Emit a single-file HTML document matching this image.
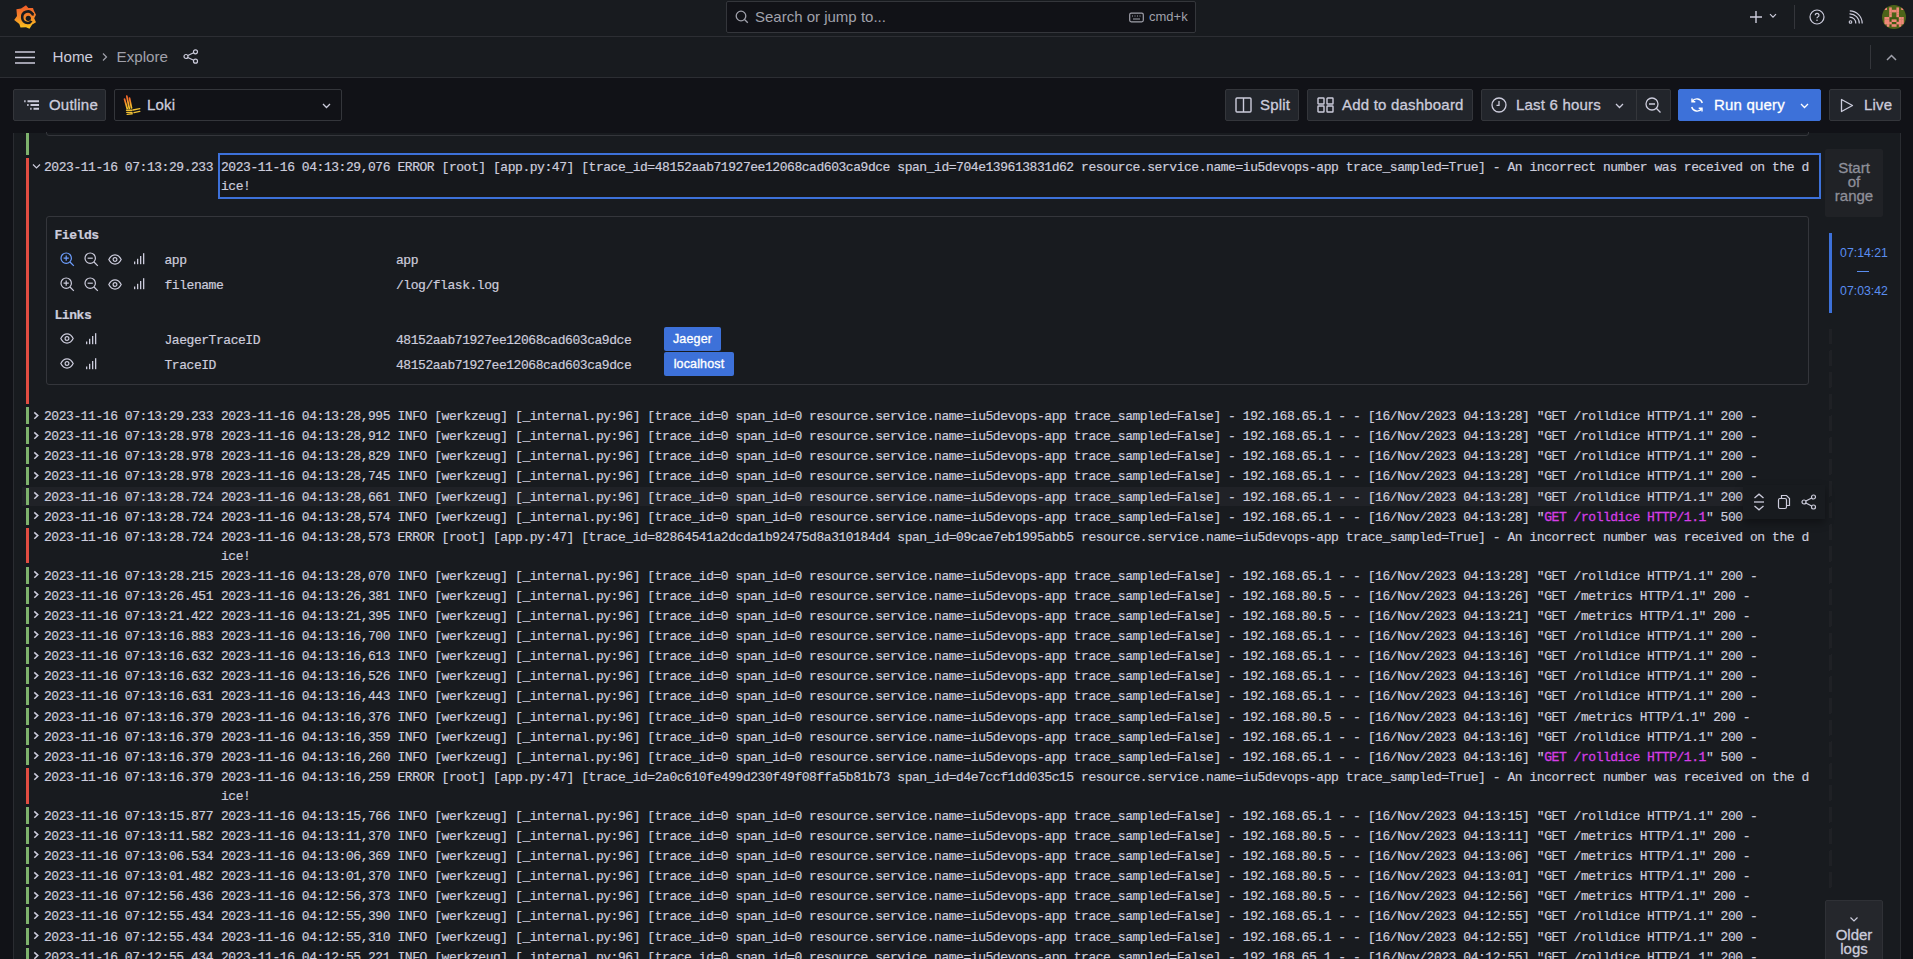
<!DOCTYPE html>
<html><head><meta charset="utf-8">
<style>
*{box-sizing:border-box;margin:0;padding:0}
html,body{-webkit-font-smoothing:antialiased;width:1913px;height:959px;overflow:hidden;background:#111217;font-family:"Liberation Sans",sans-serif;color:#ccccdc}
.abs{position:absolute}
svg{display:block}
#topbar{position:absolute;left:0;top:0;width:1913px;height:37px;background:#181b1f;border-bottom:1px solid #2c2e33}
#crumbs{position:absolute;left:0;top:37px;width:1913px;height:41px;background:#181b1f;border-bottom:1px solid #2c2e33}
#search{position:absolute;left:726px;top:1px;width:470px;height:32px;background:#111217;border:1px solid #34363b;border-radius:2px}
#search .ph{position:absolute;left:28px;top:7px;font-size:15px;color:#a0a1ab;line-height:16px}
#search .kbd{position:absolute;left:422px;top:7px;font-size:13px;color:#a0a1ab;line-height:16px}
.crumb{position:absolute;top:48px;font-size:15.2px;line-height:18px}
.btn{position:absolute;top:89px;height:32px;background:#22252b;border:1px solid #34363b;border-radius:2px;font-size:15px;color:#ccccdc;line-height:30px;white-space:nowrap}
.btn span{position:absolute;top:0;letter-spacing:0.2px;-webkit-text-stroke:0.3px currentColor}
#panel{position:absolute;left:13px;top:133px;width:1888px;height:900px;background:#181b1f;border:1px solid #2a2c31;border-top:none;border-radius:0 0 2px 2px;overflow:hidden}
.row{position:absolute;left:0;width:1813px;font-family:"Liberation Mono",monospace;font-size:13px;letter-spacing:-0.4503px;line-height:19.2px;color:#ccccdc;white-space:pre;-webkit-text-stroke:0.2px #ccccdc}
.row .lv{position:absolute;left:13px;top:1.5px;bottom:1.5px;width:3px}
.lv.info{background:#7eb26d}
.lv.err{background:#e24d42}
.row .chev{position:absolute;left:20px;top:5px}
.row .ts{position:absolute;left:31px;top:1px}
.row .msg{position:absolute;left:208px;top:1px;width:1590px;white-space:pre-wrap;word-break:break-all}
.row.hov{background:transparent}
.hovbg{position:absolute;background:#202227}
.dt{position:absolute;font-family:"Liberation Mono",monospace;font-size:13px;letter-spacing:-0.4503px;line-height:19.2px;color:#ccccdc;white-space:pre;-webkit-text-stroke:0.2px #ccccdc}
.lbtn{position:absolute;height:24px;background:#3d71d9;border-radius:2px;color:#fff;font-size:12.5px;letter-spacing:0.15px;-webkit-text-stroke:0.35px #fff;line-height:24px;text-align:center}
.hl{color:#d63ee6;-webkit-text-stroke:0.3px #d63ee6}

</style></head>
<body>
<!-- top bar -->
<div id="topbar">
  <svg class="abs" style="left:8px;top:2px" width="34" height="32" viewBox="0 0 34 32">
    <defs><linearGradient id="lg" x1="0" y1="0" x2="0" y2="1"><stop offset="0" stop-color="#f05a28"/><stop offset="0.5" stop-color="#f4862a"/><stop offset="1" stop-color="#fbc81c"/></linearGradient></defs>
    <path fill="url(#lg)" d="M18 3.2 L20.4 6 L25 6.1 L25.8 8.6 L28 12.7 L26.2 16.2 L28 20.3 L24.2 22.6 L21.5 26.7 L18 25.2 L12.5 25.5 L11.3 22 L6.2 17.9 L9 13.9 L8.4 7.3 L13.1 6.6 Z"/>
    <path d="M25.8 12.4 L24.6 12.2 A5.6 5.6 0 0 0 14.2 15.6 A5.4 5.4 0 0 0 19.6 21 A4.5 4.5 0 0 0 23.4 18.8" fill="none" stroke="#181b1f" stroke-width="2.6"/>
    <circle cx="20.3" cy="16.3" r="2.6" fill="#181b1f"/>
  </svg>
  <div id="search">
    <svg class="abs" style="left:8px;top:8px" width="14" height="14" viewBox="0 0 14 14"><circle cx="6" cy="6" r="4.8" fill="none" stroke="#a0a1ab" stroke-width="1.3"/><path d="M9.5 9.5 L12.8 12.8" stroke="#a0a1ab" stroke-width="1.3"/></svg>
    <div class="ph">Search or jump to...</div>
    <svg class="abs" style="left:402px;top:10px" width="15" height="11" viewBox="0 0 15 11"><rect x="0.7" y="1.2" width="13.6" height="8.6" rx="1.5" fill="none" stroke="#a0a1ab" stroke-width="1.2"/><path d="M3 4h1M5.5 4h1M8 4h1M10.5 4h1M4 7h7" stroke="#a0a1ab" stroke-width="1.1"/></svg>
    <div class="kbd">cmd+k</div>
  </div>
  <!-- plus -->
  <svg class="abs" style="left:1749px;top:10px" width="14" height="14" viewBox="0 0 14 14"><path d="M7 1V13M1 7H13" stroke="#ccccdc" stroke-width="1.4"/></svg>
  <svg class="abs" style="left:1769px;top:13px" width="8" height="6" viewBox="0 0 8 6"><path d="M1 1.2L4 4.2L7 1.2" fill="none" stroke="#ccccdc" stroke-width="1.2"/></svg>
  <div class="abs" style="left:1794px;top:5px;width:1px;height:24px;background:#34363b"></div>
  <!-- help -->
  <svg class="abs" style="left:1809px;top:9px" width="16" height="16" viewBox="0 0 16 16"><circle cx="8" cy="8" r="7" fill="none" stroke="#ccccdc" stroke-width="1.2"/><path d="M6.2 6.3a1.9 1.9 0 1 1 2.6 1.7c-.6.3-.8.6-.8 1.3" fill="none" stroke="#ccccdc" stroke-width="1.2"/><circle cx="8" cy="11.3" r=".8" fill="#ccccdc"/></svg>
  <!-- rss -->
  <svg class="abs" style="left:1848px;top:10px" width="15" height="15" viewBox="0 0 15 15"><circle cx="2.5" cy="12" r="1.3" fill="none" stroke="#ccccdc" stroke-width="1.1"/><path d="M1.5 7.2a6 6 0 0 1 6.3 6.3M1.5 3.8a9.5 9.5 0 0 1 9.8 9.8M1.8 0.8a12.6 12.6 0 0 1 12.4 12.6" fill="none" stroke="#ccccdc" stroke-width="1.2"/></svg>
  <!-- avatar -->
  <svg class="abs" style="left:1882px;top:5px" width="24" height="24" viewBox="0 0 10 10">
    <defs><clipPath id="cav"><circle cx="5" cy="5" r="5"/></clipPath></defs>
    <g clip-path="url(#cav)"><rect width="10" height="10" fill="#4d6419"/><rect x="3" y="5" width="4" height="4" fill="#3f5a12"/>
    <g fill="#f08878"><rect x="1" y="1" width="1.08" height="1.08"/><rect x="8" y="1" width="1.08" height="1.08"/><rect x="3" y="1" width="1.08" height="1.08"/><rect x="3" y="2" width="1.08" height="1.08"/><rect x="3" y="3" width="1.08" height="1.08"/><rect x="3" y="4" width="1.08" height="1.08"/><rect x="6" y="1" width="1.08" height="1.08"/><rect x="6" y="2" width="1.08" height="1.08"/><rect x="6" y="3" width="1.08" height="1.08"/><rect x="6" y="4" width="1.08" height="1.08"/><rect x="4" y="2" width="1.08" height="1.08"/><rect x="5" y="2" width="1.08" height="1.08"/><rect x="1" y="5" width="1.08" height="1.08"/><rect x="2" y="5" width="1.08" height="1.08"/><rect x="1" y="6" width="1.08" height="1.08"/><rect x="2" y="6" width="1.08" height="1.08"/><rect x="1" y="7" width="1.08" height="1.08"/><rect x="2" y="7" width="1.08" height="1.08"/><rect x="3" y="7" width="1.08" height="1.08"/><rect x="2" y="8" width="1.08" height="1.08"/><rect x="7" y="5" width="1.08" height="1.08"/><rect x="8" y="5" width="1.08" height="1.08"/><rect x="7" y="6" width="1.08" height="1.08"/><rect x="8" y="6" width="1.08" height="1.08"/><rect x="6" y="7" width="1.08" height="1.08"/><rect x="7" y="7" width="1.08" height="1.08"/><rect x="8" y="7" width="1.08" height="1.08"/><rect x="7" y="8" width="1.08" height="1.08"/><rect x="4" y="6" width="1.08" height="1.08"/><rect x="5" y="6" width="1.08" height="1.08"/><rect x="4" y="8" width="1.08" height="1.08"/><rect x="5" y="8" width="1.08" height="1.08"/></g></g>
  </svg>
</div>

<!-- breadcrumbs bar -->
<div id="crumbs">
  <svg class="abs" style="left:15px;top:14px" width="20" height="13" viewBox="0 0 20 13"><path d="M0 1H20M0 6.5H20M0 12H20" stroke="#ccccdc" stroke-width="1.5"/></svg>
</div>
<div class="crumb" style="left:52.5px;color:#ccccdc">Home</div>
<svg class="abs" style="left:101px;top:52px" width="8" height="10" viewBox="0 0 8 10"><path d="M2 1.5L5.5 5L2 8.5" fill="none" stroke="#a0a1ab" stroke-width="1.2"/></svg>
<div class="crumb" style="left:116.5px;color:#a0a1ab">Explore</div>
<svg class="abs" style="left:183px;top:49px" width="16" height="15" viewBox="0 0 16 15"><circle cx="12.5" cy="2.8" r="2" fill="none" stroke="#ccccdc" stroke-width="1.2"/><circle cx="3" cy="7.5" r="2" fill="none" stroke="#ccccdc" stroke-width="1.2"/><circle cx="12.5" cy="12.2" r="2" fill="none" stroke="#ccccdc" stroke-width="1.2"/><path d="M4.8 6.5L10.7 3.8M4.8 8.5L10.7 11.2" stroke="#ccccdc" stroke-width="1.2"/></svg>
<div class="abs" style="left:1870px;top:45px;width:1px;height:24px;background:#34363b"></div>
<svg class="abs" style="left:1886px;top:54px" width="11" height="7" viewBox="0 0 11 7"><path d="M1 6L5.5 1.5L10 6" fill="none" stroke="#a0a1ab" stroke-width="1.5"/></svg>

<!-- toolbar -->
<div class="btn" style="left:13px;width:93px">
  <svg class="abs" style="left:9px;top:8px" width="18" height="14" viewBox="0 0 18 14"><path d="M4.5 3.2H16M7.5 7H16M10.5 10.8H16" stroke="#ccccdc" stroke-width="1.9"/><path d="M1.2 3.2H2.6M4.2 7H5.6M7.2 10.8H8.6" stroke="#ccccdc" stroke-width="1.9"/></svg>
  <span style="left:35px">Outline</span>
</div>
<div class="btn" style="left:114px;width:228px;background:#111217">
  <svg class="abs" style="left:3px;top:2px" width="30" height="26" viewBox="0 0 30 26">
    <defs><linearGradient id="lk" x1="0" y1="0" x2="0" y2="1"><stop offset="0" stop-color="#f4642a"/><stop offset="0.6" stop-color="#f5a62a"/><stop offset="1" stop-color="#f2c62e"/></linearGradient></defs>
    <g fill="none" stroke="url(#lk)" stroke-width="1.7" stroke-linecap="round"><path d="M6.5 7L9.2 16.5"/><path d="M8.8 4.2L11.3 16.5"/><path d="M11.5 6L13.5 16"/></g>
    <g fill="none" stroke="#efc034" stroke-width="1.4" stroke-linecap="round"><path d="M8.5 18.2H13.8"/><path d="M8.8 20.4H14"/><path d="M9.2 22.4L14.2 21.8"/><path d="M15 18L21.8 16.6"/><path d="M16 20.6L21.8 19.4"/></g>
  </svg>
  <span style="left:32px">Loki</span>
  <svg class="abs" style="left:207px;top:13px" width="9" height="6" viewBox="0 0 9 6"><path d="M1 1L4.5 4.5L8 1" fill="none" stroke="#ccccdc" stroke-width="1.3"/></svg>
</div>

<div class="btn" style="left:1225px;width:74px">
  <svg class="abs" style="left:9px;top:7px" width="17" height="16" viewBox="0 0 17 16"><rect x="1" y="1" width="15" height="14" rx="1" fill="none" stroke="#ccccdc" stroke-width="1.4"/><path d="M8.5 1V15" stroke="#ccccdc" stroke-width="1.4"/></svg>
  <span style="left:34px">Split</span>
</div>
<div class="btn" style="left:1307px;width:166px">
  <svg class="abs" style="left:9px;top:7px" width="17" height="16" viewBox="0 0 17 16"><g fill="none" stroke="#ccccdc" stroke-width="1.4"><rect x="1" y="1" width="6" height="6" rx=".6"/><rect x="10" y="1" width="6" height="6" rx=".6"/><rect x="1" y="9" width="6" height="6" rx=".6"/><rect x="10" y="9" width="6" height="6" rx=".6"/></g></svg>
  <span style="left:34px">Add to dashboard</span>
</div>
<div class="btn" style="left:1481px;width:190px">
  <svg class="abs" style="left:9px;top:7px" width="16" height="16" viewBox="0 0 16 16"><circle cx="8" cy="8" r="7" fill="none" stroke="#ccccdc" stroke-width="1.3"/><path d="M8 4V8.3H5.5" fill="none" stroke="#ccccdc" stroke-width="1.3"/></svg>
  <span style="left:34px">Last 6 hours</span>
  <svg class="abs" style="left:133px;top:13px" width="9" height="6" viewBox="0 0 9 6"><path d="M1 1L4.5 4.5L8 1" fill="none" stroke="#ccccdc" stroke-width="1.3"/></svg>
  <div class="abs" style="left:154px;top:0;width:1px;height:30px;background:#34363b"></div>
  <svg class="abs" style="left:163px;top:7px" width="17" height="17" viewBox="0 0 17 17"><circle cx="7" cy="7" r="6" fill="none" stroke="#ccccdc" stroke-width="1.3"/><path d="M4 7H10M11.3 11.3L15.5 15.5" stroke="#ccccdc" stroke-width="1.3"/></svg>
</div>
<div class="btn" style="left:1678px;width:143px;background:#3d71d9;border-color:#3d71d9;color:#fff">
  <svg class="abs" style="left:10px;top:7px" width="16" height="16" viewBox="0 0 16 16"><g fill="none" stroke="#fff" stroke-width="1.4"><path d="M13.3 6A5.6 5.6 0 0 0 3.2 4.5"/><path d="M2.7 10A5.6 5.6 0 0 0 12.8 11.5"/><path d="M3 1.5V4.8H6.3M13 14.5V11.2H9.7"/></g></svg>
  <span style="left:35px">Run query</span>
  <svg class="abs" style="left:121px;top:13px" width="9" height="6" viewBox="0 0 9 6"><path d="M1 1L4.5 4.5L8 1" fill="none" stroke="#fff" stroke-width="1.3"/></svg>
</div>
<div class="btn" style="left:1829px;width:72px">
  <svg class="abs" style="left:10px;top:8px" width="14" height="15" viewBox="0 0 14 15"><path d="M1.5 1.5V13.5L12.5 7.5Z" fill="none" stroke="#ccccdc" stroke-width="1.3" stroke-linejoin="round"/></svg>
  <span style="left:34px">Live</span>
</div>

<!-- logs panel -->
<div id="panel">
</div>
<div id="logs" class="abs" style="left:13px;top:132px;width:1820px;height:827px;overflow:hidden">
  <!-- previous expanded tail -->
  <i class="abs" style="left:13px;top:1px;width:3px;height:22px;background:#7eb26d"></i>
  <div class="abs" style="left:33px;top:-20px;width:1763px;height:24px;border:1px solid #34363b;border-radius:3px"></div>
  <!-- expanded row -->
  <svg class="abs" style="left:19px;top:31px" width="9" height="7" viewBox="0 0 9 7"><path d="M1 1.5L4.5 5L8 1.5" fill="none" stroke="#ccccdc" stroke-width="1.2"/></svg>
  <i class="abs" style="left:13px;top:26px;width:3px;height:246px;background:#e24d42"></i>
  <div class="row" style="top:24.5px;height:40px"><span class="ts">2023-11-16 07:13:29.233</span></div>
  <div class="abs" style="left:205px;top:21px;width:1603px;height:46px;border:2px solid #3d71d9;background:#16181c"></div>
  <div class="row" style="top:24.5px;height:40px"><span class="msg" style="left:208px">2023-11-16 04:13:29,076 ERROR [root] [app.py:47] [trace_id=48152aab71927ee12068cad603ca9dce span_id=704e139613831d62 resource.service.name=iu5devops-app trace_sampled=True] - An incorrect number was received on the dice!</span></div>
  <div id="details" class="abs" style="left:33px;top:84px;width:1763px;height:169px;border:1px solid #34363b;border-radius:3px"></div>
  <div class="dt" style="left:41.5px;top:94px;font-weight:bold">Fields</div>
  <svg class="abs" style="left:46.5px;top:120px" width="15" height="15" viewBox="0 0 15 15"><g fill="none" stroke="#6e9fff" stroke-width="1.2"><circle cx="6.2" cy="6.2" r="5.2"/><path d="M10 10L13.8 13.8"/><path d="M3.6 6.2H8.8M6.2 3.6V8.8"/></g></svg>
<svg class="abs" style="left:70.5px;top:120px" width="15" height="15" viewBox="0 0 15 15"><g fill="none" stroke="#ccccdc" stroke-width="1.2"><circle cx="6.2" cy="6.2" r="5.2"/><path d="M10 10L13.8 13.8"/><path d="M3.6 6.2H8.8"/></g></svg>
<svg class="abs" style="left:95px;top:121.8px" width="14" height="11" viewBox="0 0 14 11"><g fill="none" stroke="#ccccdc" stroke-width="1.2"><path d="M0.8 5.5C2.5 2.2 4.8 0.9 7 0.9S11.5 2.2 13.2 5.5C11.5 8.8 9.2 10.1 7 10.1S2.5 8.8 0.8 5.5Z"/><circle cx="7" cy="5.5" r="1.9"/></g></svg>
<svg class="abs" style="left:120.5px;top:121px" width="11" height="12" viewBox="0 0 11 12"><g fill="#ccccdc"><rect x="0" y="8.5" width="1.3" height="2.7"/><rect x="3" y="5.8" width="1.3" height="5.4"/><rect x="6" y="3" width="1.3" height="8.2"/><rect x="9" y="0.2" width="1.3" height="11"/></g></svg>
<svg class="abs" style="left:46.5px;top:145px" width="15" height="15" viewBox="0 0 15 15"><g fill="none" stroke="#ccccdc" stroke-width="1.2"><circle cx="6.2" cy="6.2" r="5.2"/><path d="M10 10L13.8 13.8"/><path d="M3.6 6.2H8.8M6.2 3.6V8.8"/></g></svg>
<svg class="abs" style="left:70.5px;top:145px" width="15" height="15" viewBox="0 0 15 15"><g fill="none" stroke="#ccccdc" stroke-width="1.2"><circle cx="6.2" cy="6.2" r="5.2"/><path d="M10 10L13.8 13.8"/><path d="M3.6 6.2H8.8"/></g></svg>
<svg class="abs" style="left:95px;top:146.8px" width="14" height="11" viewBox="0 0 14 11"><g fill="none" stroke="#ccccdc" stroke-width="1.2"><path d="M0.8 5.5C2.5 2.2 4.8 0.9 7 0.9S11.5 2.2 13.2 5.5C11.5 8.8 9.2 10.1 7 10.1S2.5 8.8 0.8 5.5Z"/><circle cx="7" cy="5.5" r="1.9"/></g></svg>
<svg class="abs" style="left:120.5px;top:146px" width="11" height="12" viewBox="0 0 11 12"><g fill="#ccccdc"><rect x="0" y="8.5" width="1.3" height="2.7"/><rect x="3" y="5.8" width="1.3" height="5.4"/><rect x="6" y="3" width="1.3" height="8.2"/><rect x="9" y="0.2" width="1.3" height="11"/></g></svg>
<svg class="abs" style="left:47px;top:201.0px" width="14" height="11" viewBox="0 0 14 11"><g fill="none" stroke="#ccccdc" stroke-width="1.2"><path d="M0.8 5.5C2.5 2.2 4.8 0.9 7 0.9S11.5 2.2 13.2 5.5C11.5 8.8 9.2 10.1 7 10.1S2.5 8.8 0.8 5.5Z"/><circle cx="7" cy="5.5" r="1.9"/></g></svg>
<svg class="abs" style="left:73px;top:201.0px" width="11" height="12" viewBox="0 0 11 12"><g fill="#ccccdc"><rect x="0" y="8.5" width="1.3" height="2.7"/><rect x="3" y="5.8" width="1.3" height="5.4"/><rect x="6" y="3" width="1.3" height="8.2"/><rect x="9" y="0.2" width="1.3" height="11"/></g></svg>
<svg class="abs" style="left:47px;top:226.0px" width="14" height="11" viewBox="0 0 14 11"><g fill="none" stroke="#ccccdc" stroke-width="1.2"><path d="M0.8 5.5C2.5 2.2 4.8 0.9 7 0.9S11.5 2.2 13.2 5.5C11.5 8.8 9.2 10.1 7 10.1S2.5 8.8 0.8 5.5Z"/><circle cx="7" cy="5.5" r="1.9"/></g></svg>
<svg class="abs" style="left:73px;top:226.0px" width="11" height="12" viewBox="0 0 11 12"><g fill="#ccccdc"><rect x="0" y="8.5" width="1.3" height="2.7"/><rect x="3" y="5.8" width="1.3" height="5.4"/><rect x="6" y="3" width="1.3" height="8.2"/><rect x="9" y="0.2" width="1.3" height="11"/></g></svg>
  <div class="dt" style="left:151.5px;top:119px">app</div><div class="dt" style="left:383px;top:119px">app</div>
  <div class="dt" style="left:151.5px;top:143.8px">filename</div><div class="dt" style="left:383px;top:143.8px">/log/flask.log</div>
  <div class="dt" style="left:41.5px;top:174.3px;font-weight:bold">Links</div>
  <div class="dt" style="left:151.5px;top:199.1px">JaegerTraceID</div><div class="dt" style="left:383px;top:199.1px">48152aab71927ee12068cad603ca9dce</div>
  <div class="dt" style="left:151.5px;top:224.2px">TraceID</div><div class="dt" style="left:383px;top:224.2px">48152aab71927ee12068cad603ca9dce</div>
  <div class="lbtn" style="left:651px;top:195px;width:57px">Jaeger</div>
  <div class="lbtn" style="left:651px;top:220px;width:70px">localhost</div>
  <!-- hover -->
  <div class="hovbg" style="left:9px;top:355px;width:1721px;height:19px"></div>
  <div class="row" style="top:273.50px;height:20.15px"><i class="lv info"></i><svg class="chev" width="7" height="10" viewBox="0 0 7 10"><path d="M1.3 1.4L4.8 4.6L1.3 7.8" fill="none" stroke="#ccccdc" stroke-width="1.5"/></svg><span class="ts" style="top:1.52px">2023-11-16 07:13:29.233</span><span class="msg" style="top:1.52px">2023-11-16 04:13:28,995 INFO [werkzeug] [_internal.py:96] [trace_id=0 span_id=0 resource.service.name=iu5devops-app trace_sampled=False] - 192.168.65.1 - - [16/Nov/2023 04:13:28] "GET /rolldice HTTP/1.1" 200 -</span></div>
<div class="row" style="top:293.65px;height:20.15px"><i class="lv info"></i><svg class="chev" width="7" height="10" viewBox="0 0 7 10"><path d="M1.3 1.4L4.8 4.6L1.3 7.8" fill="none" stroke="#ccccdc" stroke-width="1.5"/></svg><span class="ts" style="top:1.37px">2023-11-16 07:13:28.978</span><span class="msg" style="top:1.37px">2023-11-16 04:13:28,912 INFO [werkzeug] [_internal.py:96] [trace_id=0 span_id=0 resource.service.name=iu5devops-app trace_sampled=False] - 192.168.65.1 - - [16/Nov/2023 04:13:28] "GET /rolldice HTTP/1.1" 200 -</span></div>
<div class="row" style="top:313.80px;height:20.15px"><i class="lv info"></i><svg class="chev" width="7" height="10" viewBox="0 0 7 10"><path d="M1.3 1.4L4.8 4.6L1.3 7.8" fill="none" stroke="#ccccdc" stroke-width="1.5"/></svg><span class="ts" style="top:1.22px">2023-11-16 07:13:28.978</span><span class="msg" style="top:1.22px">2023-11-16 04:13:28,829 INFO [werkzeug] [_internal.py:96] [trace_id=0 span_id=0 resource.service.name=iu5devops-app trace_sampled=False] - 192.168.65.1 - - [16/Nov/2023 04:13:28] "GET /rolldice HTTP/1.1" 200 -</span></div>
<div class="row" style="top:333.95px;height:20.15px"><i class="lv info"></i><svg class="chev" width="7" height="10" viewBox="0 0 7 10"><path d="M1.3 1.4L4.8 4.6L1.3 7.8" fill="none" stroke="#ccccdc" stroke-width="1.5"/></svg><span class="ts" style="top:1.07px">2023-11-16 07:13:28.978</span><span class="msg" style="top:1.07px">2023-11-16 04:13:28,745 INFO [werkzeug] [_internal.py:96] [trace_id=0 span_id=0 resource.service.name=iu5devops-app trace_sampled=False] - 192.168.65.1 - - [16/Nov/2023 04:13:28] "GET /rolldice HTTP/1.1" 200 -</span></div>
<div class="row hov" style="top:354.10px;height:20.15px"><i class="lv info"></i><svg class="chev" width="7" height="10" viewBox="0 0 7 10"><path d="M1.3 1.4L4.8 4.6L1.3 7.8" fill="none" stroke="#ccccdc" stroke-width="1.5"/></svg><span class="ts" style="top:1.92px">2023-11-16 07:13:28.724</span><span class="msg" style="top:1.92px">2023-11-16 04:13:28,661 INFO [werkzeug] [_internal.py:96] [trace_id=0 span_id=0 resource.service.name=iu5devops-app trace_sampled=False] - 192.168.65.1 - - [16/Nov/2023 04:13:28] "GET /rolldice HTTP/1.1" 200 -</span></div>
<div class="row" style="top:374.25px;height:20.15px"><i class="lv info"></i><svg class="chev" width="7" height="10" viewBox="0 0 7 10"><path d="M1.3 1.4L4.8 4.6L1.3 7.8" fill="none" stroke="#ccccdc" stroke-width="1.5"/></svg><span class="ts" style="top:1.77px">2023-11-16 07:13:28.724</span><span class="msg" style="top:1.77px">2023-11-16 04:13:28,574 INFO [werkzeug] [_internal.py:96] [trace_id=0 span_id=0 resource.service.name=iu5devops-app trace_sampled=False] - 192.168.65.1 - - [16/Nov/2023 04:13:28] "<span class="hl">GET /rolldice HTTP/1.1</span>" 500 -</span></div>
<div class="row" style="top:394.40px;height:38.6px"><i class="lv err"></i><svg class="chev" width="7" height="10" viewBox="0 0 7 10"><path d="M1.3 1.4L4.8 4.6L1.3 7.8" fill="none" stroke="#ccccdc" stroke-width="1.5"/></svg><span class="ts" style="top:1.62px">2023-11-16 07:13:28.724</span><span class="msg" style="top:1.62px">2023-11-16 04:13:28,573 ERROR [root] [app.py:47] [trace_id=82864541a2dcda1b92475d8a310184d4 span_id=09cae7eb1995abb5 resource.service.name=iu5devops-app trace_sampled=True] - An incorrect number was received on the dice!</span></div>
<div class="row" style="top:433.00px;height:20.15px"><i class="lv info"></i><svg class="chev" width="7" height="10" viewBox="0 0 7 10"><path d="M1.3 1.4L4.8 4.6L1.3 7.8" fill="none" stroke="#ccccdc" stroke-width="1.5"/></svg><span class="ts" style="top:2.02px">2023-11-16 07:13:28.215</span><span class="msg" style="top:2.02px">2023-11-16 04:13:28,070 INFO [werkzeug] [_internal.py:96] [trace_id=0 span_id=0 resource.service.name=iu5devops-app trace_sampled=False] - 192.168.65.1 - - [16/Nov/2023 04:13:28] "GET /rolldice HTTP/1.1" 200 -</span></div>
<div class="row" style="top:453.15px;height:20.15px"><i class="lv info"></i><svg class="chev" width="7" height="10" viewBox="0 0 7 10"><path d="M1.3 1.4L4.8 4.6L1.3 7.8" fill="none" stroke="#ccccdc" stroke-width="1.5"/></svg><span class="ts" style="top:1.87px">2023-11-16 07:13:26.451</span><span class="msg" style="top:1.87px">2023-11-16 04:13:26,381 INFO [werkzeug] [_internal.py:96] [trace_id=0 span_id=0 resource.service.name=iu5devops-app trace_sampled=False] - 192.168.80.5 - - [16/Nov/2023 04:13:26] "GET /metrics HTTP/1.1" 200 -</span></div>
<div class="row" style="top:473.30px;height:20.15px"><i class="lv info"></i><svg class="chev" width="7" height="10" viewBox="0 0 7 10"><path d="M1.3 1.4L4.8 4.6L1.3 7.8" fill="none" stroke="#ccccdc" stroke-width="1.5"/></svg><span class="ts" style="top:1.72px">2023-11-16 07:13:21.422</span><span class="msg" style="top:1.72px">2023-11-16 04:13:21,395 INFO [werkzeug] [_internal.py:96] [trace_id=0 span_id=0 resource.service.name=iu5devops-app trace_sampled=False] - 192.168.80.5 - - [16/Nov/2023 04:13:21] "GET /metrics HTTP/1.1" 200 -</span></div>
<div class="row" style="top:493.45px;height:20.15px"><i class="lv info"></i><svg class="chev" width="7" height="10" viewBox="0 0 7 10"><path d="M1.3 1.4L4.8 4.6L1.3 7.8" fill="none" stroke="#ccccdc" stroke-width="1.5"/></svg><span class="ts" style="top:1.57px">2023-11-16 07:13:16.883</span><span class="msg" style="top:1.57px">2023-11-16 04:13:16,700 INFO [werkzeug] [_internal.py:96] [trace_id=0 span_id=0 resource.service.name=iu5devops-app trace_sampled=False] - 192.168.65.1 - - [16/Nov/2023 04:13:16] "GET /rolldice HTTP/1.1" 200 -</span></div>
<div class="row" style="top:513.60px;height:20.15px"><i class="lv info"></i><svg class="chev" width="7" height="10" viewBox="0 0 7 10"><path d="M1.3 1.4L4.8 4.6L1.3 7.8" fill="none" stroke="#ccccdc" stroke-width="1.5"/></svg><span class="ts" style="top:1.42px">2023-11-16 07:13:16.632</span><span class="msg" style="top:1.42px">2023-11-16 04:13:16,613 INFO [werkzeug] [_internal.py:96] [trace_id=0 span_id=0 resource.service.name=iu5devops-app trace_sampled=False] - 192.168.65.1 - - [16/Nov/2023 04:13:16] "GET /rolldice HTTP/1.1" 200 -</span></div>
<div class="row" style="top:533.75px;height:20.15px"><i class="lv info"></i><svg class="chev" width="7" height="10" viewBox="0 0 7 10"><path d="M1.3 1.4L4.8 4.6L1.3 7.8" fill="none" stroke="#ccccdc" stroke-width="1.5"/></svg><span class="ts" style="top:1.27px">2023-11-16 07:13:16.632</span><span class="msg" style="top:1.27px">2023-11-16 04:13:16,526 INFO [werkzeug] [_internal.py:96] [trace_id=0 span_id=0 resource.service.name=iu5devops-app trace_sampled=False] - 192.168.65.1 - - [16/Nov/2023 04:13:16] "GET /rolldice HTTP/1.1" 200 -</span></div>
<div class="row" style="top:553.90px;height:20.15px"><i class="lv info"></i><svg class="chev" width="7" height="10" viewBox="0 0 7 10"><path d="M1.3 1.4L4.8 4.6L1.3 7.8" fill="none" stroke="#ccccdc" stroke-width="1.5"/></svg><span class="ts" style="top:1.12px">2023-11-16 07:13:16.631</span><span class="msg" style="top:1.12px">2023-11-16 04:13:16,443 INFO [werkzeug] [_internal.py:96] [trace_id=0 span_id=0 resource.service.name=iu5devops-app trace_sampled=False] - 192.168.65.1 - - [16/Nov/2023 04:13:16] "GET /rolldice HTTP/1.1" 200 -</span></div>
<div class="row" style="top:574.05px;height:20.15px"><i class="lv info"></i><svg class="chev" width="7" height="10" viewBox="0 0 7 10"><path d="M1.3 1.4L4.8 4.6L1.3 7.8" fill="none" stroke="#ccccdc" stroke-width="1.5"/></svg><span class="ts" style="top:1.97px">2023-11-16 07:13:16.379</span><span class="msg" style="top:1.97px">2023-11-16 04:13:16,376 INFO [werkzeug] [_internal.py:96] [trace_id=0 span_id=0 resource.service.name=iu5devops-app trace_sampled=False] - 192.168.80.5 - - [16/Nov/2023 04:13:16] "GET /metrics HTTP/1.1" 200 -</span></div>
<div class="row" style="top:594.20px;height:20.15px"><i class="lv info"></i><svg class="chev" width="7" height="10" viewBox="0 0 7 10"><path d="M1.3 1.4L4.8 4.6L1.3 7.8" fill="none" stroke="#ccccdc" stroke-width="1.5"/></svg><span class="ts" style="top:1.82px">2023-11-16 07:13:16.379</span><span class="msg" style="top:1.82px">2023-11-16 04:13:16,359 INFO [werkzeug] [_internal.py:96] [trace_id=0 span_id=0 resource.service.name=iu5devops-app trace_sampled=False] - 192.168.65.1 - - [16/Nov/2023 04:13:16] "GET /rolldice HTTP/1.1" 200 -</span></div>
<div class="row" style="top:614.35px;height:20.15px"><i class="lv info"></i><svg class="chev" width="7" height="10" viewBox="0 0 7 10"><path d="M1.3 1.4L4.8 4.6L1.3 7.8" fill="none" stroke="#ccccdc" stroke-width="1.5"/></svg><span class="ts" style="top:1.67px">2023-11-16 07:13:16.379</span><span class="msg" style="top:1.67px">2023-11-16 04:13:16,260 INFO [werkzeug] [_internal.py:96] [trace_id=0 span_id=0 resource.service.name=iu5devops-app trace_sampled=False] - 192.168.65.1 - - [16/Nov/2023 04:13:16] "<span class="hl">GET /rolldice HTTP/1.1</span>" 500 -</span></div>
<div class="row" style="top:634.50px;height:38.6px"><i class="lv err"></i><svg class="chev" width="7" height="10" viewBox="0 0 7 10"><path d="M1.3 1.4L4.8 4.6L1.3 7.8" fill="none" stroke="#ccccdc" stroke-width="1.5"/></svg><span class="ts" style="top:1.52px">2023-11-16 07:13:16.379</span><span class="msg" style="top:1.52px">2023-11-16 04:13:16,259 ERROR [root] [app.py:47] [trace_id=2a0c610fe499d230f49f08ffa5b81b73 span_id=d4e7ccf1dd035c15 resource.service.name=iu5devops-app trace_sampled=True] - An incorrect number was received on the dice!</span></div>
<div class="row" style="top:673.10px;height:20.15px"><i class="lv info"></i><svg class="chev" width="7" height="10" viewBox="0 0 7 10"><path d="M1.3 1.4L4.8 4.6L1.3 7.8" fill="none" stroke="#ccccdc" stroke-width="1.5"/></svg><span class="ts" style="top:1.92px">2023-11-16 07:13:15.877</span><span class="msg" style="top:1.92px">2023-11-16 04:13:15,766 INFO [werkzeug] [_internal.py:96] [trace_id=0 span_id=0 resource.service.name=iu5devops-app trace_sampled=False] - 192.168.65.1 - - [16/Nov/2023 04:13:15] "GET /rolldice HTTP/1.1" 200 -</span></div>
<div class="row" style="top:693.25px;height:20.15px"><i class="lv info"></i><svg class="chev" width="7" height="10" viewBox="0 0 7 10"><path d="M1.3 1.4L4.8 4.6L1.3 7.8" fill="none" stroke="#ccccdc" stroke-width="1.5"/></svg><span class="ts" style="top:1.77px">2023-11-16 07:13:11.582</span><span class="msg" style="top:1.77px">2023-11-16 04:13:11,370 INFO [werkzeug] [_internal.py:96] [trace_id=0 span_id=0 resource.service.name=iu5devops-app trace_sampled=False] - 192.168.80.5 - - [16/Nov/2023 04:13:11] "GET /metrics HTTP/1.1" 200 -</span></div>
<div class="row" style="top:713.40px;height:20.15px"><i class="lv info"></i><svg class="chev" width="7" height="10" viewBox="0 0 7 10"><path d="M1.3 1.4L4.8 4.6L1.3 7.8" fill="none" stroke="#ccccdc" stroke-width="1.5"/></svg><span class="ts" style="top:1.62px">2023-11-16 07:13:06.534</span><span class="msg" style="top:1.62px">2023-11-16 04:13:06,369 INFO [werkzeug] [_internal.py:96] [trace_id=0 span_id=0 resource.service.name=iu5devops-app trace_sampled=False] - 192.168.80.5 - - [16/Nov/2023 04:13:06] "GET /metrics HTTP/1.1" 200 -</span></div>
<div class="row" style="top:733.55px;height:20.15px"><i class="lv info"></i><svg class="chev" width="7" height="10" viewBox="0 0 7 10"><path d="M1.3 1.4L4.8 4.6L1.3 7.8" fill="none" stroke="#ccccdc" stroke-width="1.5"/></svg><span class="ts" style="top:1.47px">2023-11-16 07:13:01.482</span><span class="msg" style="top:1.47px">2023-11-16 04:13:01,370 INFO [werkzeug] [_internal.py:96] [trace_id=0 span_id=0 resource.service.name=iu5devops-app trace_sampled=False] - 192.168.80.5 - - [16/Nov/2023 04:13:01] "GET /metrics HTTP/1.1" 200 -</span></div>
<div class="row" style="top:753.70px;height:20.15px"><i class="lv info"></i><svg class="chev" width="7" height="10" viewBox="0 0 7 10"><path d="M1.3 1.4L4.8 4.6L1.3 7.8" fill="none" stroke="#ccccdc" stroke-width="1.5"/></svg><span class="ts" style="top:1.32px">2023-11-16 07:12:56.436</span><span class="msg" style="top:1.32px">2023-11-16 04:12:56,373 INFO [werkzeug] [_internal.py:96] [trace_id=0 span_id=0 resource.service.name=iu5devops-app trace_sampled=False] - 192.168.80.5 - - [16/Nov/2023 04:12:56] "GET /metrics HTTP/1.1" 200 -</span></div>
<div class="row" style="top:773.85px;height:20.15px"><i class="lv info"></i><svg class="chev" width="7" height="10" viewBox="0 0 7 10"><path d="M1.3 1.4L4.8 4.6L1.3 7.8" fill="none" stroke="#ccccdc" stroke-width="1.5"/></svg><span class="ts" style="top:1.17px">2023-11-16 07:12:55.434</span><span class="msg" style="top:1.17px">2023-11-16 04:12:55,390 INFO [werkzeug] [_internal.py:96] [trace_id=0 span_id=0 resource.service.name=iu5devops-app trace_sampled=False] - 192.168.65.1 - - [16/Nov/2023 04:12:55] "GET /rolldice HTTP/1.1" 200 -</span></div>
<div class="row" style="top:794.00px;height:20.15px"><i class="lv info"></i><svg class="chev" width="7" height="10" viewBox="0 0 7 10"><path d="M1.3 1.4L4.8 4.6L1.3 7.8" fill="none" stroke="#ccccdc" stroke-width="1.5"/></svg><span class="ts" style="top:2.02px">2023-11-16 07:12:55.434</span><span class="msg" style="top:2.02px">2023-11-16 04:12:55,310 INFO [werkzeug] [_internal.py:96] [trace_id=0 span_id=0 resource.service.name=iu5devops-app trace_sampled=False] - 192.168.65.1 - - [16/Nov/2023 04:12:55] "GET /rolldice HTTP/1.1" 200 -</span></div>
<div class="row" style="top:814.15px;height:20.15px"><i class="lv info"></i><svg class="chev" width="7" height="10" viewBox="0 0 7 10"><path d="M1.3 1.4L4.8 4.6L1.3 7.8" fill="none" stroke="#ccccdc" stroke-width="1.5"/></svg><span class="ts" style="top:1.87px">2023-11-16 07:12:55.434</span><span class="msg" style="top:1.87px">2023-11-16 04:12:55,221 INFO [werkzeug] [_internal.py:96] [trace_id=0 span_id=0 resource.service.name=iu5devops-app trace_sampled=False] - 192.168.65.1 - - [16/Nov/2023 04:12:55] "GET /rolldice HTTP/1.1" 200 -</span></div>
</div>

<!-- right nav -->
<div class="abs" style="left:1825px;top:149px;width:58px;height:68px;background:#202226;border-radius:2px;color:#8e8f99;font-size:15px;-webkit-text-stroke:0.3px #8e8f99;line-height:14.2px;text-align:center;padding-top:12px">Start<br>of<br>range</div>
<div class="abs" style="left:1829px;top:233px;width:3px;height:80px;background:#3d71d9"></div>
<div class="abs" style="left:1836px;top:246px;width:56px;color:#5a8ef0;font-size:12.3px;line-height:14px;text-align:center">07:14:21</div>
<div class="abs" style="left:1857px;top:271px;width:12px;height:1px;background:#5a8ef0"></div>
<div class="abs" style="left:1836px;top:284px;width:56px;color:#5a8ef0;font-size:12.3px;line-height:14px;text-align:center">07:03:42</div>
<div class="abs" style="left:1829px;top:329px;width:3px;height:563px;background:repeating-linear-gradient(165deg,#1f2125 0 15px,#181b1f 15px 21px)"></div>
<div class="abs" style="left:1825px;top:900px;width:58px;height:70px;background:#25272c;border:1px solid #2f3136;border-radius:2px;color:#ccccdc;font-size:15px;-webkit-text-stroke:0.3px #ccccdc;line-height:14px;text-align:center;padding-top:27px">Older<br>logs</div>
<svg class="abs" style="left:1849px;top:916px" width="10" height="7" viewBox="0 0 10 7"><path d="M1.5 1.5L5 5L8.5 1.5" fill="none" stroke="#ccccdc" stroke-width="1.2"/></svg>
<!-- hover menu -->
<div class="abs" style="left:1743px;top:485px;width:82px;height:34px;background:#181b1f;box-shadow:0 4px 8px rgba(0,0,0,0.35)"></div>
<svg class="abs" style="left:1753px;top:493px" width="12" height="18" viewBox="0 0 12 18"><g fill="none" stroke="#ccccdc" stroke-width="1.3"><path d="M1.5 5L6 1.2L10.5 5"/><path d="M1.5 13L6 16.8L10.5 13"/><path d="M1 9H11"/></g></svg>
<svg class="abs" style="left:1777px;top:494px" width="14" height="16" viewBox="0 0 14 16"><g fill="none" stroke="#ccccdc" stroke-width="1.2"><path d="M4.5 4.5V1.5H9.5L12.5 4.5V11.5H9.5"/><rect x="1.5" y="4.5" width="8" height="10" rx="1.5"/></g></svg>
<svg class="abs" style="left:1801px;top:494px" width="16" height="16" viewBox="0 0 16 16"><g fill="none" stroke="#ccccdc" stroke-width="1.2"><circle cx="12.5" cy="3" r="2"/><circle cx="3" cy="8" r="2"/><circle cx="12.5" cy="13" r="2"/><path d="M4.8 7L10.7 4M4.8 9L10.7 12"/></g></svg>
</body></html>
